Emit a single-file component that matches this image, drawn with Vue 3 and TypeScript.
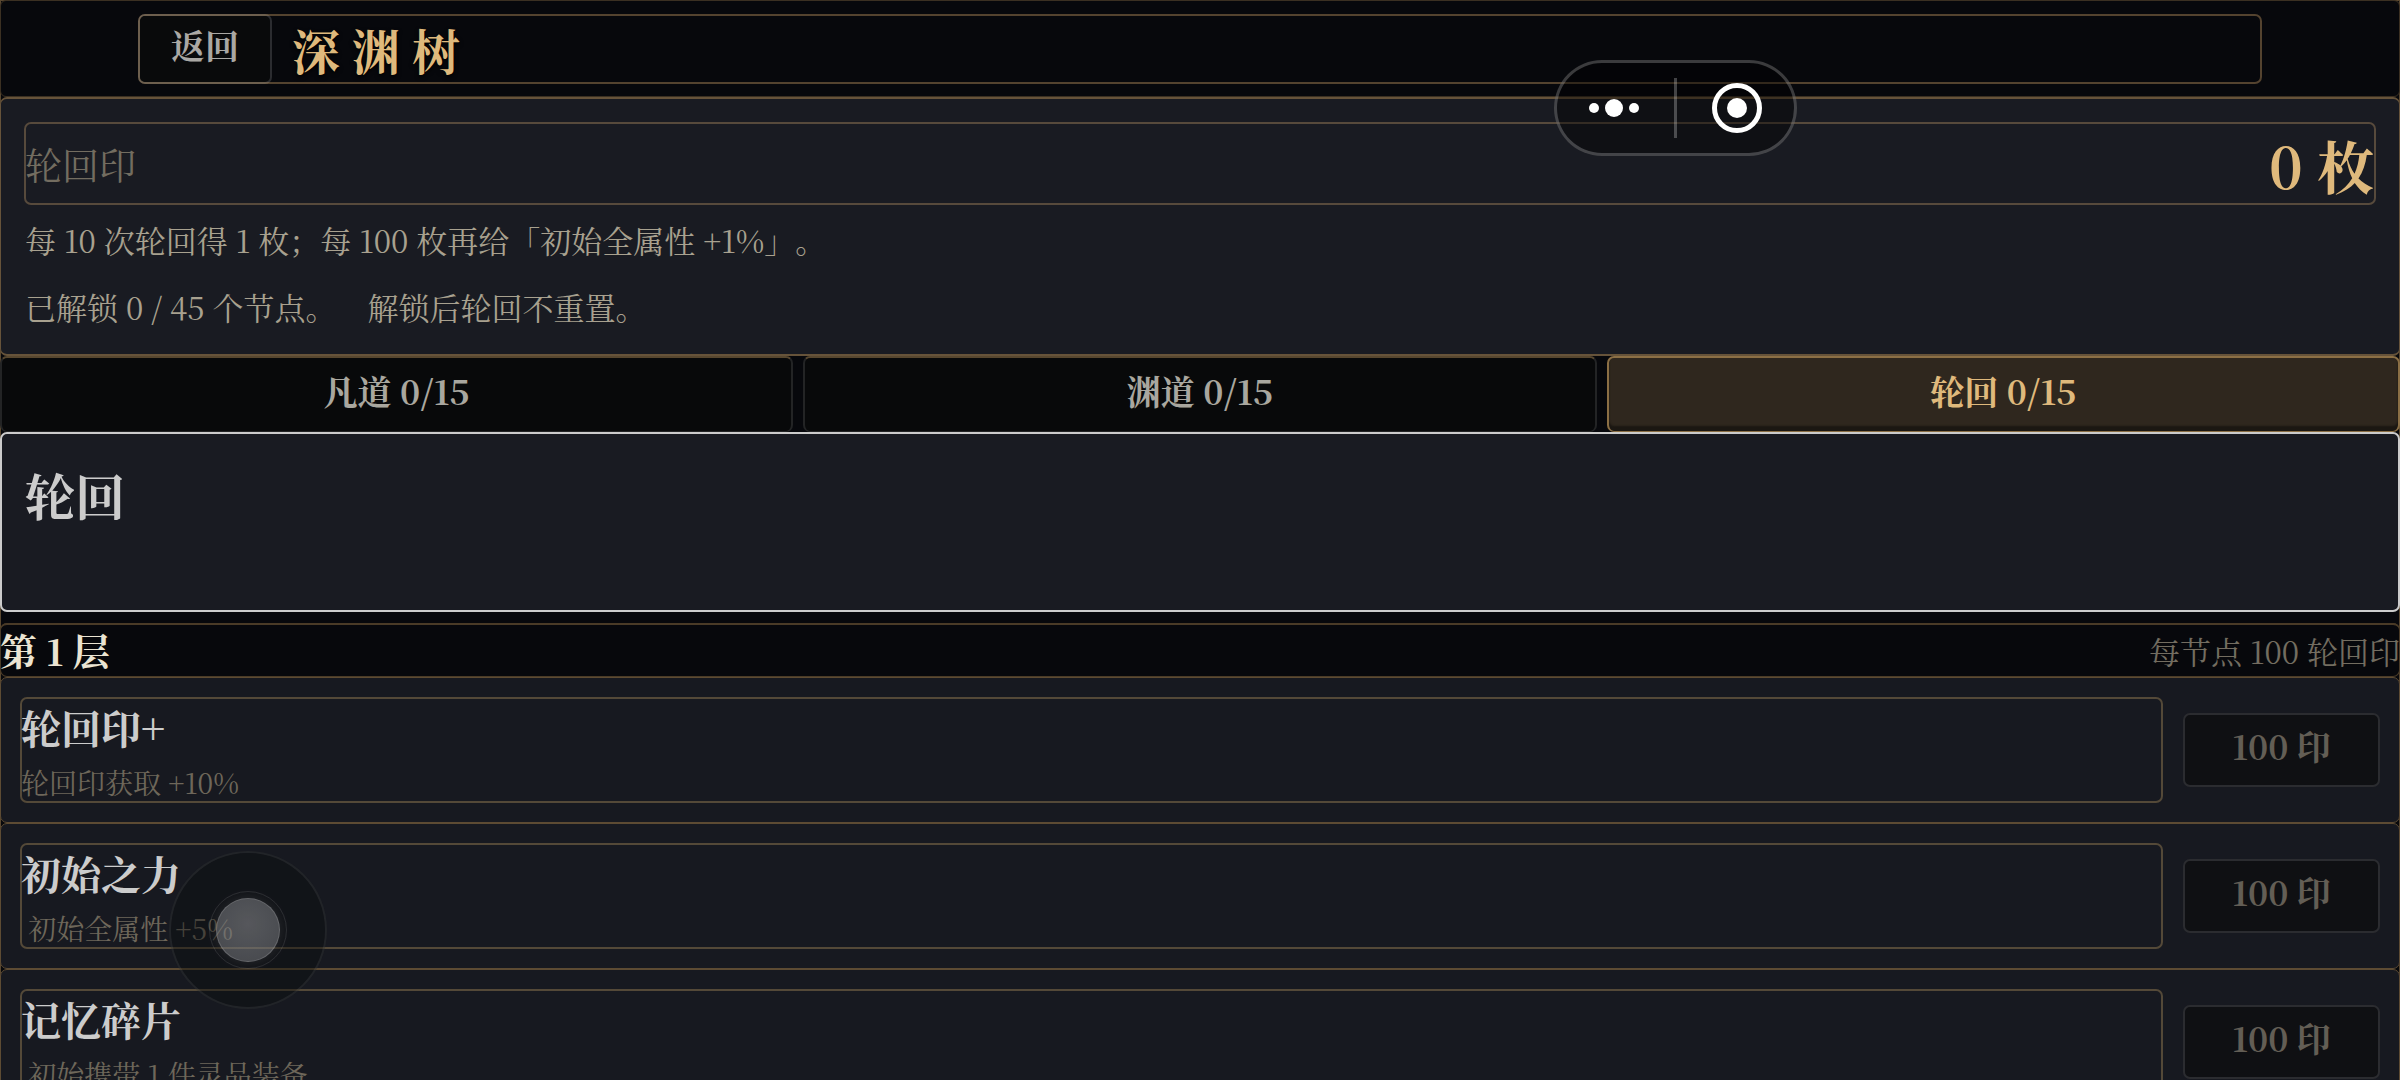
<script setup lang="ts">
import { ref } from 'vue'

interface Tab { name: string; done: number }
interface TreeNode { name: string; effect: string; cost: number }

const total = 15
const tabs: Tab[] = [
  { name: '凡道', done: 0 },
  { name: '渊道', done: 0 },
  { name: '轮回', done: 0 },
]
const active = ref(2)

const nodes: TreeNode[] = [
  { name: '轮回印+', effect: '轮回印获取 +10%', cost: 100 },
  { name: '初始之力', effect: '\u00a0初始全属性 +5%', cost: 100 },
  { name: '记忆碎片', effect: '\u00a0初始携带 1 件灵品装备', cost: 100 },
]
</script>

<template>
  <div class="page">
    <header class="topbar">
      <div class="topbar-inner">
        <button class="back" type="button">返回</button>
        <h1 class="title">深渊树</h1>
      </div>
    </header>

    <section class="summary">
      <div class="balance">
        <span class="balance-label">轮回印</span>
        <strong class="balance-value">0 枚</strong>
      </div>
      <p class="note">每 10 次轮回得 1 枚；每 100 枚再给「初始全属性 +1%」。</p>
      <p class="note">已解锁 0 / 45 个节点。&emsp;解锁后轮回不重置。</p>
    </section>

    <nav class="tabs">
      <button
        v-for="(tab, i) in tabs"
        :key="tab.name"
        type="button"
        class="tab"
        :class="{ active: i === active }"
        @click="active = i"
      >{{ tab.name }} {{ tab.done }}/{{ total }}</button>
    </nav>

    <section class="path">
      <h2 class="path-name">{{ tabs[active].name }}</h2>
    </section>

    <div class="tier">
      <h3 class="tier-name">第 1 层</h3>
      <span class="tier-cost">每节点 100 轮回印</span>
    </div>

    <article v-for="node in nodes" :key="node.name" class="node">
      <div class="node-info">
        <h4 class="node-name">{{ node.name }}</h4>
        <p class="node-effect">{{ node.effect }}</p>
      </div>
      <button class="buy" type="button">{{ node.cost }} 印</button>
    </article>

    <div class="capsule">
      <button class="capsule-btn" type="button" aria-label="更多">
        <svg width="52" height="20" viewBox="0 0 52 20" fill="#fff">
          <circle cx="6" cy="10" r="5" />
          <circle cx="26" cy="10" r="9" />
          <circle cx="46" cy="10" r="5" />
        </svg>
      </button>
      <span class="capsule-line"></span>
      <button class="capsule-btn" type="button" aria-label="关闭">
        <svg width="50" height="50" viewBox="0 0 50 50" fill="#fff">
          <circle cx="25" cy="25" r="22.5" fill="none" stroke="#fff" stroke-width="5" />
          <circle cx="25" cy="25" r="10" />
        </svg>
      </button>
    </div>

    <div class="stick">
      <div class="stick-ring"><div class="stick-knob"></div></div>
    </div>
  </div>
</template>

<style>
body {
  margin: 0;
  background: #07090c;
}
</style>

<style scoped>
.page {
  height: 100vh;
  overflow-y: auto;
  scrollbar-width: none;
  box-sizing: border-box;
  background: #07080c;
  box-shadow: inset 0 0 0 1px #5a4830;
  color: #cccccc;
  font-family: "Noto Serif CJK SC", "Noto Serif SC", "Liberation Serif", "Noto Sans CJK SC", serif;
}
.page * {
  box-sizing: border-box;
}
h1, h2, h3, h4, p {
  margin: 0;
}
button {
  font-family: inherit;
  padding: 0;
  cursor: pointer;
}
.topbar {
  padding: 13px 137px 12px;
  border: 1px solid #3b3022;
  border-radius: 6px;
}
.topbar-inner {
  display: flex;
  align-items: stretch;
  height: 70px;
  border: 2px solid #54432f;
  border-radius: 7px;
}
.back {
  width: 134px;
  margin: -2px 0 -2px -2px;
  padding-bottom: 10px;
  border: 2px solid rgba(255, 255, 255, 0.15);
  border-radius: 7px;
  background: #090a0b;
  background-clip: padding-box;
  color: #aaa8a4;
  font-size: 34px;
  font-weight: 700;
}
.title {
  margin-left: 20px;
  color: #dfb97c;
  font-size: 48px;
  line-height: 68px;
  letter-spacing: 12px;
  text-shadow: 0 2px 4px #000;
}
.summary {
  padding: 23px 23px 14px;
  border: 2px solid #66533a;
  border-width: 2px 1px;
  border-radius: 7px;
  background: #191b22;
}
.balance {
  display: flex;
  align-items: center;
  justify-content: space-between;
  height: 83px;
  margin-bottom: 1px;
  padding: 0 2px 0 1px;
  border-radius: 7px;
  box-shadow: inset 0 0 0 2px #574a3c;
}
.balance-label {
  color: #736d60;
  font-size: 37px;
}
.balance-value {
  color: #dfb97c;
  font-size: 57px;
  line-height: 78px;
}
.note {
  padding-left: 1px;
  color: #a8a18f;
  font-size: 31px;
  line-height: 67px;
  text-spacing-trim: space-all;
}
.tabs {
  display: grid;
  grid-template-columns: repeat(3, 1fr);
  gap: 10px;
}
.tab {
  height: 76px;
  padding-bottom: 8px;
  border: 2px solid #232425;
  border-top-color: #57472f;
  border-bottom-width: 1px;
  border-radius: 7px;
  background: #08090a;
  color: #a9a79f;
  font-size: 34px;
  font-weight: 700;
}
.tab.active {
  border-color: #8b6f45;
  background: #2f271e;
  color: #dfb97c;
  box-shadow: inset 0 -5px 2px #1b1712;
}
.path {
  min-height: 180px;
  padding: 24px 23px;
  border: 2px solid #cccccc;
  border-radius: 7px;
  background: #191b22;
}
.path-name {
  font-size: 50px;
  line-height: 72px;
}
.tier {
  display: flex;
  align-items: center;
  justify-content: space-between;
  height: 54px;
  margin-top: 11px;
  border-radius: 7px;
  box-shadow: inset 0 0 0 1px #4a3b27, inset 0 2px #4a3b27;
}
.tier-name {
  color: #ebe4d2;
  font-size: 37px;
}
.tier-cost {
  color: #736d60;
  font-size: 31px;
}
.node {
  display: flex;
  align-items: center;
  gap: 20px;
  height: 146px;
  padding: 0 19px;
  border: 1px solid #5d4b33;
  border-radius: 7px;
  background: #171920;
}
.node-info {
  flex: 1;
  height: 106px;
  padding: 2px 1px;
  border-radius: 7px;
  box-shadow: inset 0 0 0 2px #544938;
}
.node-name {
  font-size: 40px;
  line-height: 56px;
}
.node-effect {
  color: #6e675a;
  font-size: 28px;
  line-height: 54px;
}
.buy {
  width: 197px;
  height: 74px;
  padding-bottom: 10px;
  border: 2px solid #2b2c30;
  border-radius: 7px;
  background: #0f1013;
  color: #635e55;
  font-size: 34px;
  font-weight: 700;
}
.capsule {
  position: fixed;
  top: 60px;
  right: 603px;
  display: flex;
  align-items: center;
  width: 243px;
  height: 96px;
  border: 3px solid rgba(255, 255, 255, 0.22);
  border-radius: 48px;
  background: rgba(0, 0, 0, 0.4);
}
.capsule-btn {
  display: flex;
  flex: 1;
  align-items: center;
  justify-content: center;
  border: 0;
  background: none;
}
.capsule-line {
  width: 3px;
  height: 60px;
  margin: 0 3px;
  background: rgba(255, 255, 255, 0.25);
}
.stick {
  position: fixed;
  top: 851px;
  left: 169px;
  display: grid;
  place-items: center;
  width: 158px;
  height: 158px;
  border: 2px solid rgba(255, 255, 255, 0.07);
  border-radius: 50%;
  background: rgba(10, 12, 12, 0.4);
}
.stick-ring {
  display: grid;
  place-items: center;
  width: 78px;
  height: 78px;
  border: 1px solid rgba(255, 255, 255, 0.1);
  border-radius: 50%;
}
.stick-knob {
  width: 64px;
  height: 64px;
  border: 1px solid rgba(255, 255, 255, 0.15);
  border-radius: 50%;
  background: radial-gradient(circle at 50% 40%, rgba(215, 215, 220, 0.35), rgba(200, 200, 205, 0.29));
  box-shadow: 0 0 14px rgba(255, 255, 255, 0.1);
}
</style>
